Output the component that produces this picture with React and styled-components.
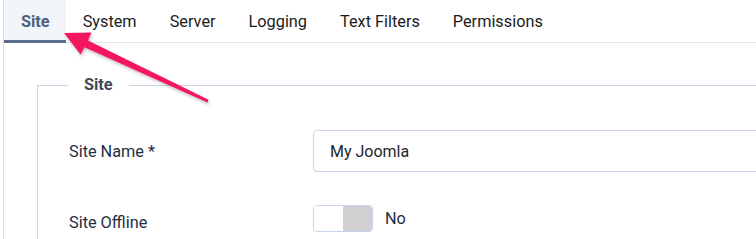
import styled, { createGlobalStyle } from 'styled-components';

const GlobalStyle = createGlobalStyle`
  html, body {
    margin: 0;
    padding: 0;
    background: #fff;
    overflow: hidden;
  }
  body {
    font-family: Roboto, "Liberation Sans", sans-serif;
  }
`;

const Page = styled.div`
  position: relative;
  width: 756px;
  height: 239px;
  overflow: hidden;
  padding-left: 3px;
  box-sizing: border-box;
`;

const Panel = styled.div`
  border-left: 1px solid #dedede;
  height: 100%;
`;

const TabBar = styled.ul`
  display: flex;
  list-style: none;
  margin: 0;
  padding: 0;
  border-bottom: 1px solid #e3e9f1;
  height: 42px;
  width: 1000px;
`;

const Tab = styled.li`
  display: flex;
  align-items: center;
  padding: 0 16px 0 17px;
  font-size: 16.3px;
  font-weight: ${(p) => (p.$active ? 700 : 400)};
  color: ${(p) => (p.$active ? '#4c5f80' : '#1c1c1c')};
  background: ${(p) => (p.$active ? '#f1f4f9' : 'transparent')};
  box-shadow: ${(p) => (p.$active ? 'inset 0 -3px 0 #5b6e90' : 'none')};
  margin-bottom: -1px;
`;

const Fieldset = styled.fieldset`
  margin: 32px 0 0 33px;
  width: 1000px;
  height: 400px;
  border: 1px solid #cbd5e8;
  border-right: none;
  border-radius: 0;
  padding: 35px 0 0 31px;
  box-sizing: border-box;
  min-inline-size: 0;
`;

const Legend = styled.legend`
  padding: 0 16px;
  font-size: 16.3px;
  font-weight: 700;
  color: #3d4a5c;
  line-height: 20px;
  margin-left: -1px;
`;

const Row = styled.div`
  display: grid;
  grid-template-columns: 244px 1fr;
  align-items: center;
  margin-bottom: ${(p) => p.$gap || 0}px;
`;

const Label = styled.label`
  font-size: 16.3px;
  color: #1f2d45;
  padding-top: ${(p) => p.$shift || 0}px;
`;

const TextInput = styled.div`
  height: 42px;
  box-sizing: border-box;
  border: 1px solid #c9d5ec;
  border-radius: 4px;
  padding: 0 16px;
  display: flex;
  align-items: center;
  font-size: 16px;
  color: #22262a;
  width: 600px;
`;

const SwitchWrap = styled.div`
  display: flex;
  align-items: center;
  gap: 12px;
`;

const Switch = styled.div`
  display: flex;
  width: 60px;
  height: 27px;
  box-sizing: border-box;
  border: 1px solid #c9d5ec;
  border-radius: 4px;
  overflow: hidden;
`;

const Half = styled.span`
  flex: 1;
  background: ${(p) => p.$on ? '#d0d0d0' : '#fff'};
`;

const SwitchText = styled.span`
  font-size: 16.3px;
  color: #1f2d45;
`;

const Arrow = styled.svg`
  position: absolute;
  left: 0;
  top: 0;
  pointer-events: none;
  overflow: visible;
`;

const tabs = ['Site', 'System', 'Server', 'Logging', 'Text Filters', 'Permissions'];

export default function App() {
  return (
    <>
      <GlobalStyle />
      <Page>
        <Panel>
          <TabBar>
            {tabs.map((t, i) => (
              <Tab key={t} $active={i === 0}>{t}</Tab>
            ))}
          </TabBar>
          <Fieldset>
            <Legend>Site</Legend>
            <Row $gap={33}>
              <Label $shift={0}>Site Name *</Label>
              <TextInput>My Joomla</TextInput>
            </Row>
            <Row>
              <Label $shift={8}>Site Offline</Label>
              <SwitchWrap>
                <Switch>
                  <Half />
                  <Half $on />
                </Switch>
                <SwitchText>No</SwitchText>
              </SwitchWrap>
            </Row>
          </Fieldset>
        </Panel>
        <Arrow width="756" height="239" viewBox="0 0 756 239">
          <defs>
            <filter id="sh" x="-20%" y="-20%" width="140%" height="140%">
              <feDropShadow dx="1" dy="2" stdDeviation="1.5" floodColor="#000" floodOpacity="0.25" />
            </filter>
          </defs>
          <polygon
            filter="url(#sh)"
            fill="#f4175f"
            points="64,33 91.5,32.5 88,40.5 208.6,99.8 207.4,102.4 84.5,47.3 80.5,54.5"
          />
        </Arrow>
      </Page>
    </>
  );
}
